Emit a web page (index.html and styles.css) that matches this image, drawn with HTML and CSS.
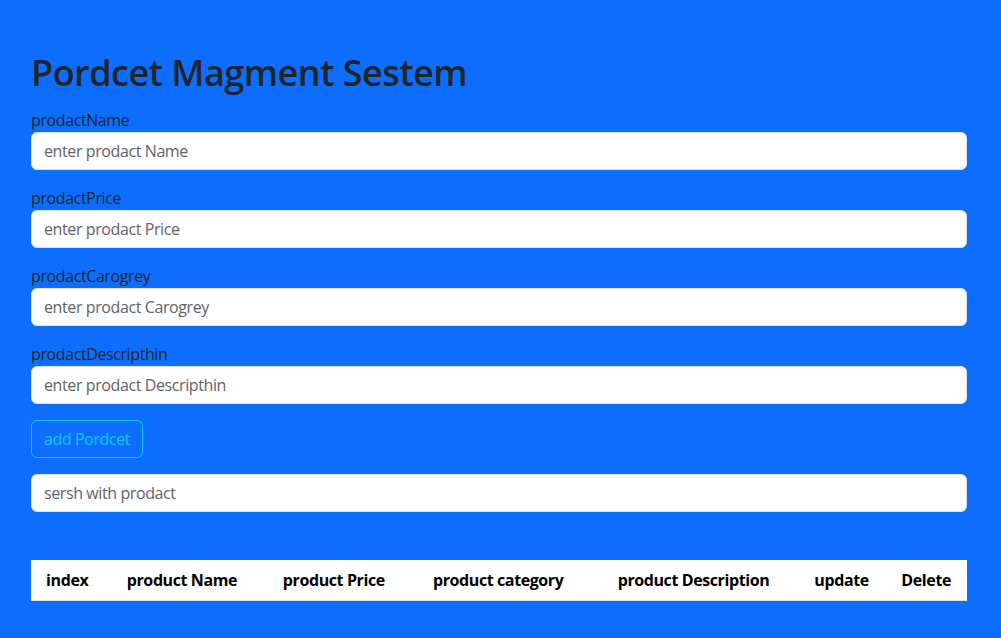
FILE: index.html
```html
<!DOCTYPE html>
<html lang="en">
<head>
<meta charset="utf-8">
<title>Pordcet Magment Sestem</title>
<link rel="stylesheet" href="styles.css">
</head>
<body>
<div class="container">
  <h1 class="title">Pordcet Magment Sestem</h1>
  <div class="field">
    <label for="pn">prodactName</label>
    <input id="pn" class="control" type="text" placeholder="enter prodact Name">
  </div>
  <div class="field">
    <label for="pp">prodactPrice</label>
    <input id="pp" class="control" type="text" placeholder="enter prodact Price">
  </div>
  <div class="field">
    <label for="pc">prodactCarogrey</label>
    <input id="pc" class="control" type="text" placeholder="enter prodact Carogrey">
  </div>
  <div class="field">
    <label for="pd">prodactDescripthin</label>
    <input id="pd" class="control" type="text" placeholder="enter prodact Descripthin">
  </div>
  <button class="btn-outline" type="button">add Pordcet</button>
  <div class="field">
    <input class="control" type="text" placeholder="sersh with prodact">
  </div>
  <table class="table">
    <thead>
      <tr>
        <th>index</th>
        <th>product Name</th>
        <th>product Price</th>
        <th>product category</th>
        <th>product Description</th>
        <th>update</th>
        <th>Delete</th>
      </tr>
    </thead>
    <tbody></tbody>
  </table>
</div>
</body>
</html>
```
FILE: styles.css
```css
* { box-sizing: border-box; }
html, body { margin: 0; padding: 0; }
body {
  background: #0d6efd;
  color: #212529;
  font-family: "Open Sans", "Noto Sans", sans-serif;
  font-size: 16px;
  line-height: 1.5;
  letter-spacing: -0.4px;
}
.container {
  width: 960px;
  margin: 0 0 0 19px;
  padding: 51px 12px 0;
}
.title {
  margin: 0 0 14px;
  font-size: 36px;
  font-weight: 600;
  line-height: 1.2;
  letter-spacing: -0.5px;
}
.field { margin-bottom: 16px; }
.field label { display: block; }
.control {
  display: block;
  width: 100%;
  height: 38px;
  padding: 6px 12px;
  font: inherit;
  letter-spacing: inherit;
  color: #212529;
  background: #fff;
  border: 1px solid #dee2e6;
  border-radius: 6px;
  outline: none;
}
.control::placeholder { color: #5f6368; }
.btn-outline {
  display: inline-block;
  height: 38px;
  padding: 6px 12px;
  margin-bottom: 16px;
  font: inherit;
  letter-spacing: inherit;
  color: #0dcaf0;
  background: transparent;
  border: 1px solid #0dcaf0;
  border-radius: 6px;
}
.table {
  width: 100%;
  margin-top: 48px;
  border-collapse: collapse;
  background: #fff;
  color: #000;
}
.table th {
  padding: 8px;
  text-align: center;
  font-weight: 700;
  border-bottom: 1px solid #dee2e6;
}
```
